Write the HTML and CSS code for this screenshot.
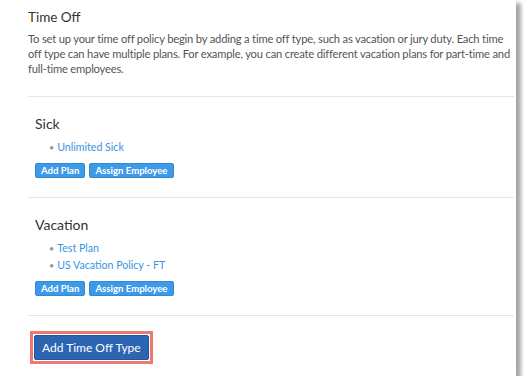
FILE: index.html
```html
<!DOCTYPE html>
<html lang="en">
<head>
    <meta charset="UTF-8">
    <title>Time Off</title>
    <link rel="stylesheet" href="styles.css">
</head>
<body>
    <div class="panel">
        <div class="intro">
            <h2 class="titulo">Time Off</h2>
            <p class="descripcion">To set up your time off policy begin by adding a time off type, such as vacation or jury duty. Each time off type can have multiple plans. For example, you can create different vacation plans for part-time and full-time employees.</p>
        </div>

        <div class="tipo">
            <h3 class="tipo-nombre">Sick</h3>
            <ul class="planes">
                <li><a href="#">Unlimited Sick</a></li>
            </ul>
            <div class="acciones">
                <button class="boton">Add Plan</button>
                <button class="boton">Assign Employee</button>
            </div>
        </div>

        <div class="tipo">
            <h3 class="tipo-nombre">Vacation</h3>
            <ul class="planes">
                <li><a href="#">Test Plan</a></li>
                <li><a href="#">US Vacation Policy - FT</a></li>
            </ul>
            <div class="acciones">
                <button class="boton">Add Plan</button>
                <button class="boton">Assign Employee</button>
            </div>
        </div>

        <div class="pie">
            <span class="resaltado">
                <button class="boton-grande">Add Time Off Type</button>
            </span>
        </div>
    </div>
</body>
</html>
```

FILE: styles.css
```css
body {
    margin: 0;
    background: #ffffff;
    font-family: Lato, Arial, sans-serif;
    color: #333;
    overflow: hidden;
}
.panel {
    width: 516px;
    height: 376px;
    background: #ffffff;
    box-shadow: 5px 3px 4px rgba(0, 0, 0, 0.35);
    padding: 0 2px 0 28px;
    box-sizing: border-box;
}
.intro {
    padding-top: 8px;
    padding-bottom: 20px;
    border-bottom: 1px solid #e6e6e6;
}
.titulo {
    margin: 0 0 5px;
    font-size: 13.5px;
    line-height: 18px;
    font-weight: 400;
    color: #333;
}
.descripcion {
    margin: 0 -2px 0 0;
    font-size: 11.2px;
    line-height: 15px;
    letter-spacing: -0.19px;
    color: #555;
}
.tipo {
    padding: 17px 0 19px 7px;
    border-bottom: 1px solid #e6e6e6;
}
.tipo-nombre {
    margin: 0 0 5px;
    font-size: 14px;
    line-height: 20px;
    font-weight: 400;
    color: #333;
}
.planes {
    list-style: none;
    margin: 0 0 7px;
    padding-left: 14px;
    font-size: 10.6px;
    line-height: 16px;
}
.planes li::before {
    content: "\2022";
    color: #999;
    font-size: 9px;
    margin-right: 3px;
}
.planes a {
    color: #3a94e2;
    text-decoration: none;
}
.acciones {
    display: flex;
    gap: 4px;
}
.boton {
    background: #3d9ae8;
    border: 1px solid #3189d6;
    border-radius: 2px;
    color: white;
    font-family: inherit;
    font-size: 9.6px;
    font-weight: 700;
    height: 15px;
    padding: 0 5px;
    line-height: 13px;
}
.pie {
    padding-top: 15px;
}
.resaltado {
    display: inline-block;
    border: 3px solid #ec7a72;
    padding: 1px;
    margin-left: 2px;
}
.boton-grande {
    display: block;
    background: #2c66b2;
    border: 1px solid #24579a;
    border-radius: 2px;
    color: white;
    font-family: inherit;
    font-size: 12px;
    height: 25px;
    padding: 0 7px;
}
```
